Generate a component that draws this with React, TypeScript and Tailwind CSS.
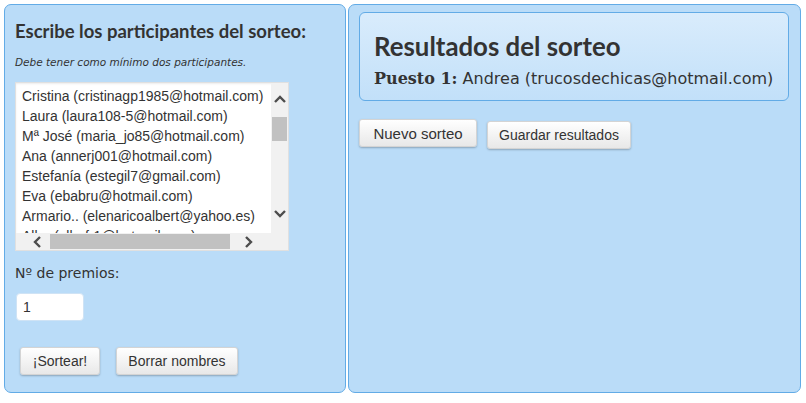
import React from "react";

// Participant list shown in the entry box
const participants = [
  "Cristina (cristinagp1985@hotmail.com)",
  "Laura (laura108-5@hotmail.com)",
  "Mª José (maria_jo85@hotmail.com)",
  "Ana (annerj001@hotmail.com)",
  "Estefanía (estegil7@gmail.com)",
  "Eva (ebabru@hotmail.com)",
  "Armario.. (elenaricoalbert@yahoo.es)",
  "Alba (albafr1@hotmail.com)",
];

const btn =
  "rounded-[3px] border border-[#d4d4d4] bg-gradient-to-b from-white to-[#e8e8e8] shadow-[0_1px_2px_rgba(0,0,0,0.25)] text-[#333] font-['Liberation_Sans',Arial,sans-serif] text-[14px] leading-none";

function Chevron({ dir }: { dir: "up" | "down" | "left" | "right" }) {
  const d = {
    up: "M2 9 L7 4 L12 9",
    down: "M2 5 L7 10 L12 5",
    left: "M9 2 L4 7 L9 12",
    right: "M5 2 L10 7 L5 12",
  }[dir];
  return (
    <svg width="14" height="14" viewBox="0 0 14 14">
      <path d={d} fill="none" stroke="#4d4d4d" strokeWidth="2.4" />
    </svg>
  );
}

function ListBox() {
  return (
    <div className="relative w-[274px] h-[169px] bg-white border border-[#e0e0e0] shadow-[inset_0_1px_2px_rgba(0,0,0,0.08)] overflow-hidden">
      <div className="pl-[6px] pt-[3px] font-['Liberation_Sans',Arial,sans-serif] text-[14px] leading-[20px] text-[#333] whitespace-nowrap">
        {participants.map((p) => (
          <div key={p}>{p}</div>
        ))}
      </div>
      {/* vertical scrollbar */}
      <div className="absolute right-0 top-0 w-[17px] h-[151px] bg-[#f1f1f1] flex flex-col items-center">
        <div className="h-[34px] flex items-center">
          <Chevron dir="up" />
        </div>
        <div className="w-[15px] h-[24px] bg-[#c1c1c1]" />
        <div className="flex-1" />
        <div className="h-[32px] flex items-center pb-[10px]">
          <Chevron dir="down" />
        </div>
      </div>
      {/* horizontal scrollbar */}
      <div className="absolute left-0 bottom-0 w-[272px] h-[17px] bg-[#f1f1f1] flex items-center">
        <div className="w-[34px] flex justify-end pr-[5px]">
          <Chevron dir="left" />
        </div>
        <div className="w-[180px] h-[15px] bg-[#c1c1c1]" />
        <div className="flex-1 flex pl-[11px]">
          <Chevron dir="right" />
        </div>
      </div>
    </div>
  );
}

export default function App() {
  return (
    <div className="w-[806px] h-[403px] bg-white flex gap-[2px] p-[4px] pr-[5px] pb-[10px] text-[#333]">
      {/* left: entry form */}
      <div className="w-[342px] rounded-[7px] border border-[#62abe6] bg-[#badcf8] pl-[10px] pt-[15px]">
        <h2 className="font-['Lato',sans-serif] font-bold text-[18.5px] leading-[22px] text-[#333]">
          Escribe los participantes del sorteo:
        </h2>
        <p className="mt-[13px] font-['DejaVu_Sans',Verdana,sans-serif] italic text-[10.5px] leading-[14px]">
          Debe tener como mínimo dos participantes.
        </p>
        <div className="mt-[13px]">
          <ListBox />
        </div>
        <div className="mt-[13px] font-['DejaVu_Sans',Verdana,sans-serif] text-[14px] leading-[18px]">
          Nº de premios:
        </div>
        <div className="mt-[11px] ml-px w-[68px] h-[28px] rounded-[4px] bg-white border border-[#cfe3f5] flex items-center pl-[6px] font-['Liberation_Sans',Arial,sans-serif] text-[14px]">
          1
        </div>
        <div className="mt-[26px] ml-[5px] flex gap-[16px]">
          <button className={`${btn} w-[80px] h-[28px]`}>¡Sortear!</button>
          <button className={`${btn} w-[122px] h-[28px]`}>Borrar nombres</button>
        </div>
      </div>

      {/* right: results */}
      <div className="flex-1 rounded-[7px] border border-[#62abe6] bg-[#badcf8] pl-[10px] pr-[11px] pt-[7px]">
        <div className="h-[89px] rounded-[6px] border border-[#62abe6] bg-gradient-to-b from-[#d9ecfc] to-[#c2e0f9] pl-[14px] pt-[18px]">
          <h1 className="font-['Lato',sans-serif] font-bold text-[25.8px] leading-[30px] text-[#333]">
            Resultados del sorteo
          </h1>
          <p className="mt-[8px] font-['DejaVu_Sans',Verdana,sans-serif] text-[16px] leading-[20px] whitespace-nowrap">
            <span className="font-['DejaVu_Serif',serif] font-bold">Puesto 1:</span> Andrea (trucosdechicas@hotmail.com)
          </p>
        </div>
        <div className="mt-[18px] flex items-start gap-[10px]">
          <button className={`${btn} w-[118px] h-[28px] text-[15px]`}>Nuevo sorteo</button>
          <button className={`${btn} w-[144px] h-[28px] mt-[2px]`}>Guardar resultados</button>
        </div>
      </div>
    </div>
  );
}
